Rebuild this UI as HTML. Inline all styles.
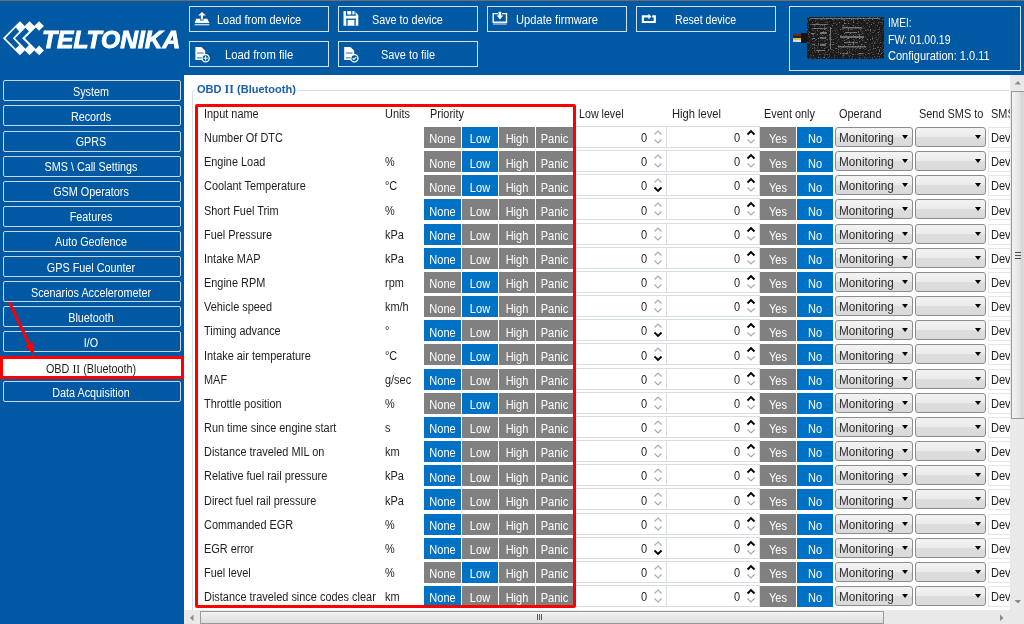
<!DOCTYPE html><html><head><meta charset="utf-8"><style>
*{box-sizing:border-box;margin:0;padding:0}
html,body{width:1024px;height:624px;overflow:hidden;background:#fff;font-family:"Liberation Sans", sans-serif;}
.a{position:absolute}
.t{position:absolute;white-space:nowrap;line-height:1}
.hb{position:absolute;border:1px solid #d3e1f0;height:26px;width:140px}
.sb{position:absolute;left:3px;width:178px;height:21px;border:1px solid #c8d9eb;border-radius:2px}
.pb{position:absolute;height:21px;background:#808080}
.on{background:#0072c6}
.sp{position:absolute;height:22px;border:1px solid #d9dee6;background:#fff}
.cb{position:absolute;height:20px;border:1px solid #8c8c8c;border-radius:3px;background:linear-gradient(#f3f3f3,#ebebeb 50%,#dddddd 51%,#d9d9d9)}
.cb i{position:absolute;right:4px;top:7px;width:0;height:0;border-left:3.5px solid transparent;border-right:3.5px solid transparent;border-top:4px solid #000}
.tx{position:absolute;height:21px;border:1px solid #e3e6ea;background:#fff}
</style></head><body>

<div class="a" style="left:0;top:0;width:1024px;height:1px;background:#6d6d6d"></div>
<div class="a" style="left:0;top:1px;width:1024px;height:74px;background:#0059a2"></div>
<div class="a" style="left:0;top:75px;width:184px;height:549px;background:#0059a2"></div>
<svg class="a" style="left:0;top:0" width="60" height="70" viewBox="0 0 60 70">
<path d="M2.9 38.2 L15.1 26.0 L19.9 21.2 L24.7 26.0 L29.5 21.2 L34.3 26.0 L39.1 21.2 L43.9 26.0 L39.1 30.8 L35.8 27.5 L25.0 38.2 L35.8 48.9 L39.1 45.6 L43.9 50.4 L39.1 55.2 L34.3 50.4 L29.5 55.2 L24.7 50.4 L19.9 55.2 L15.1 50.4Z" fill="#fff"/>
<path d="M5.4 38.2 L15.7 27.6 L19.2 31.5 L12.8 38.2 L19.2 44.9 L15.7 48.8Z" fill="#0059a2"/>
<path d="M15.1 38.2 L25.5 27.7 L28.9 31.4 L22.1 38.2 L28.9 45.0 L25.5 48.7Z" fill="#0059a2"/>
</svg>
<div class="t" style="left:42px;top:28.8px;font-size:23.5px;font-weight:bold;font-style:italic;color:#fff;-webkit-text-stroke:0.9px #fff;transform:scaleX(1.045);transform-origin:0 0">TELTONIKA</div>
<div class="hb" style="left:189px;top:6px"></div>
<div class="t" style="left:217px;top:14.20px;font-size:12px;color:#fff;font-weight:normal;transform:scaleX(0.915);transform-origin:0 0;">Load from device</div>
<div class="hb" style="left:338px;top:6px"></div>
<div class="t" style="left:372.2px;top:14.20px;font-size:12px;color:#fff;font-weight:normal;transform:scaleX(0.9);transform-origin:0 0;">Save to device</div>
<div class="hb" style="left:487px;top:6px"></div>
<div class="t" style="left:516px;top:14.20px;font-size:12px;color:#fff;font-weight:normal;transform:scaleX(0.93);transform-origin:0 0;">Update firmware</div>
<div class="hb" style="left:636px;top:6px"></div>
<div class="t" style="left:675.3px;top:14.20px;font-size:12px;color:#fff;font-weight:normal;transform:scaleX(0.88);transform-origin:0 0;">Reset device</div>
<div class="hb" style="left:189px;top:41px"></div>
<div class="t" style="left:224.7px;top:49.20px;font-size:12px;color:#fff;font-weight:normal;transform:scaleX(0.94);transform-origin:0 0;">Load from file</div>
<div class="hb" style="left:338px;top:41px"></div>
<div class="t" style="left:380.6px;top:49.20px;font-size:12px;color:#fff;font-weight:normal;transform:scaleX(0.91);transform-origin:0 0;">Save to file</div>
<svg class="a" style="left:0;top:0" width="800" height="75">
<g fill="#fff">
<path d="M202 11.9 L205.9 15.6 L203 15.6 L203 19.6 L200.9 19.6 L200.9 15.6 L198.1 15.6Z"/>
<path d="M196.3 18.7 L200.2 18.7 L200.2 20.6 L203.6 20.6 L203.6 18.7 L207.3 18.7 L209.4 23 L194.6 23Z"/>
<rect x="194.6" y="23.9" width="14.8" height="1.5" fill-opacity="0.75"/>
<path d="M343.5 11 L354.6 11 L358.3 15 L358.3 25.8 L343.5 25.8Z"/>
</g>
<g fill="#0059a2">
<rect x="346" y="11" width="1.2" height="4.5"/><rect x="346" y="14.5" width="9.5" height="1.2"/><rect x="354.5" y="11" width="1" height="4.5"/>
<rect x="351.2" y="11" width="1.2" height="4"/>
<rect x="346.3" y="18.6" width="9.4" height="1.3"/><rect x="346.3" y="18.6" width="1.3" height="7.2"/><rect x="354.4" y="18.6" width="1.3" height="7.2"/>
</g>
<g fill="none" stroke="#fff" stroke-width="1.4">
<path d="M498 13.6 L493.2 13.6 L493.2 22.3 L506.5 22.3 L506.5 13.6 L502 13.6"/>
<path d="M649 16.4 L642.9 16.4 L642.9 22 L654.8 22 L654.8 16.4 L652.2 16.4" stroke-width="2.2"/>
</g>
<g fill="#fff">
<path d="M498.6 11.8 h2.6 v3.7 h2 l-3.3 4 l-3.3 -4 h2z"/>
<rect x="493" y="23.2" width="13.6" height="1.6" fill-opacity="0.55"/>
<path d="M648.5 13.8 L651.5 16.5 L648.5 19.4Z"/>
<path d="M195.4 47 L201.5 47 L205.2 50.7 L205.2 54.5 A4 4 0 0 0 202 60.1 L195.4 60.1Z"/>
<circle cx="205.6" cy="58.2" r="3.6" fill="none" stroke="#fff" stroke-width="1.3"/>
<path d="M205.6 56 v4.4 M203.4 58.2 h4.4" stroke="#fff" stroke-width="1.1"/>
<path d="M344.2 47 L350.5 47 L354.2 50.7 L354.2 54.5 A4 4 0 0 0 351 60.1 L344.2 60.1Z"/>
<circle cx="354.4" cy="58.2" r="3.6" fill="none" stroke="#fff" stroke-width="1.3"/>
<path d="M352.6 58.2 l1.3 1.3 l2.4 -2.4" fill="none" stroke="#fff" stroke-width="1.1"/>
</g>
<g fill="#0059a2" fill-opacity="0.55">
<rect x="197" y="52.2" width="6.5" height="1.6"/><rect x="197" y="57" width="4.5" height="1.6"/>
<rect x="346" y="52.2" width="6.5" height="1.6"/><rect x="346" y="57" width="4.5" height="1.6"/>
</g>
</svg>
<div class="a" style="left:789px;top:6px;width:232px;height:65px;border:1px solid #d3e1f0"></div>
<svg class="a" style="left:807px;top:17px" width="77" height="42"><defs><filter id="nz" x="0" y="0" width="100%" height="100%"><feTurbulence type="fractalNoise" baseFrequency="0.8" numOctaves="2" seed="7"/><feColorMatrix values="0 0 0 0 1  0 0 0 0 1  0 0 0 0 1  0 0 0 3 -1.6"/></filter></defs>
<rect width="77" height="42" rx="2" fill="#1a1a1a"/>
<rect width="77" height="42" filter="url(#nz)" opacity="0.5"/>
<g fill="#b0b0b0" fill-opacity="0.55">
<rect x="3" y="1" width="70" height="1"/><rect x="5" y="7" width="15" height="1"/><rect x="6" y="11" width="14" height="1"/>
<rect x="4" y="16" width="4" height="1"/><rect x="13" y="15" width="7" height="2"/><rect x="5" y="21" width="3" height="1"/><rect x="13" y="20" width="6" height="2"/>
<rect x="5" y="27" width="3" height="1"/><rect x="13" y="27" width="6" height="2"/><rect x="9" y="33" width="9" height="1"/>
<rect x="23" y="10" width="1" height="22"/>
<rect x="35" y="10" width="20" height="1.5"/><rect x="38" y="15" width="12" height="1"/><rect x="33" y="19" width="24" height="2"/>
<rect x="37" y="25" width="14" height="1"/><rect x="31" y="29" width="28" height="1.5"/><rect x="35" y="36" width="6" height="1"/><rect x="52" y="36" width="4" height="1"/>
</g></svg>
<div class="a" style="left:801px;top:33px;width:6px;height:10px;background:#141414"></div>
<div class="a" style="left:793px;top:34px;width:8px;height:2px;background:#7a2020"></div>
<div class="a" style="left:793px;top:36px;width:8px;height:2px;background:#222"></div>
<div class="a" style="left:793px;top:38px;width:8px;height:2px;background:#d8c040"></div>
<div class="a" style="left:793px;top:40px;width:8px;height:2px;background:#ddd"></div>
<div class="t" style="left:887.6px;top:17.20px;font-size:12px;color:#fff;font-weight:normal;transform:scaleX(0.84);transform-origin:0 0;">IMEI:</div>
<div class="t" style="left:887.6px;top:33.60px;font-size:12px;color:#fff;font-weight:normal;transform:scaleX(0.87);transform-origin:0 0;">FW: 01.00.19</div>
<div class="t" style="left:887.6px;top:50.00px;font-size:12px;color:#fff;font-weight:normal;transform:scaleX(0.92);transform-origin:0 0;">Configuration: 1.0.11</div>
<div class="sb" style="top:80px"></div>
<div class="t" style="left:2.3px;top:86.00px;width:178px;text-align:center;font-size:12px;color:#fff;font-weight:normal;transform:scaleX(0.9);transform-origin:50% 0;">System</div>
<div class="sb" style="top:105px"></div>
<div class="t" style="left:2.3px;top:111.08px;width:178px;text-align:center;font-size:12px;color:#fff;font-weight:normal;transform:scaleX(0.9);transform-origin:50% 0;">Records</div>
<div class="sb" style="top:131px"></div>
<div class="t" style="left:2.3px;top:136.16px;width:178px;text-align:center;font-size:12px;color:#fff;font-weight:normal;transform:scaleX(0.9);transform-origin:50% 0;">GPRS</div>
<div class="sb" style="top:156px"></div>
<div class="t" style="left:2.3px;top:161.24px;width:178px;text-align:center;font-size:12px;color:#fff;font-weight:normal;transform:scaleX(0.9);transform-origin:50% 0;">SMS \ Call Settings</div>
<div class="sb" style="top:181px"></div>
<div class="t" style="left:2.3px;top:186.32px;width:178px;text-align:center;font-size:12px;color:#fff;font-weight:normal;transform:scaleX(0.9);transform-origin:50% 0;">GSM Operators</div>
<div class="sb" style="top:206px"></div>
<div class="t" style="left:2.3px;top:211.40px;width:178px;text-align:center;font-size:12px;color:#fff;font-weight:normal;transform:scaleX(0.9);transform-origin:50% 0;">Features</div>
<div class="sb" style="top:231px"></div>
<div class="t" style="left:2.3px;top:236.48px;width:178px;text-align:center;font-size:12px;color:#fff;font-weight:normal;transform:scaleX(0.9);transform-origin:50% 0;">Auto Geofence</div>
<div class="sb" style="top:256px"></div>
<div class="t" style="left:2.3px;top:261.56px;width:178px;text-align:center;font-size:12px;color:#fff;font-weight:normal;transform:scaleX(0.9);transform-origin:50% 0;">GPS Fuel Counter</div>
<div class="sb" style="top:281px"></div>
<div class="t" style="left:2.3px;top:286.64px;width:178px;text-align:center;font-size:12px;color:#fff;font-weight:normal;transform:scaleX(0.9);transform-origin:50% 0;">Scenarios Accelerometer</div>
<div class="sb" style="top:306px"></div>
<div class="t" style="left:2.3px;top:311.72px;width:178px;text-align:center;font-size:12px;color:#fff;font-weight:normal;transform:scaleX(0.9);transform-origin:50% 0;">Bluetooth</div>
<div class="sb" style="top:331px"></div>
<div class="t" style="left:2.3px;top:336.80px;width:178px;text-align:center;font-size:12px;color:#fff;font-weight:normal;transform:scaleX(0.9);transform-origin:50% 0;">I/O</div>
<div class="a" style="left:0;top:356px;width:184px;height:23px;border:3px solid #f00;background:#fff"></div>
<div class="t" style="left:0px;top:362.48px;width:182px;text-align:center;font-size:12px;color:#1e1e1e;font-weight:normal;transform:scaleX(0.9);transform-origin:50% 0;">OBD <span style="font-family:Liberation Serif;font-size:13px">II</span> (Bluetooth)</div>
<div class="sb" style="top:381px"></div>
<div class="t" style="left:2.3px;top:386.96px;width:178px;text-align:center;font-size:12px;color:#fff;font-weight:normal;transform:scaleX(0.9);transform-origin:50% 0;">Data Acquisition</div>
<svg class="a" style="left:0;top:290px" width="60" height="80"><g>
<line x1="9.4" y1="12.3" x2="30" y2="56" stroke="#f00" stroke-width="3"/>
<path d="M25.5 56.5 L34.4 65.4 L33.3 52Z" fill="#f00"/></g></svg>
<div class="a" style="left:192px;top:90px;width:830px;height:540px;border:1px solid #d5dfe6;border-radius:3px"></div>
<div class="a" style="left:195px;top:82px;width:103px;height:14px;background:#fff"></div>
<div class="t" style="left:196.8px;top:82.98px;font-size:11.5px;color:#1a5fae;font-weight:bold;transform:scaleX(0.96);transform-origin:0 0;">OBD <span style="font-family:Liberation Serif;font-size:12.5px">II</span> (Bluetooth)</div>
<div class="t" style="left:204px;top:108.30px;font-size:12px;color:#1e1e1e;font-weight:normal;transform:scaleX(0.91);transform-origin:0 0;">Input name</div>
<div class="t" style="left:384.6px;top:108.30px;font-size:12px;color:#1e1e1e;font-weight:normal;transform:scaleX(0.91);transform-origin:0 0;">Units</div>
<div class="t" style="left:429.6px;top:108.30px;font-size:12px;color:#1e1e1e;font-weight:normal;transform:scaleX(0.91);transform-origin:0 0;">Priority</div>
<div class="t" style="left:578.8px;top:108.30px;font-size:12px;color:#1e1e1e;font-weight:normal;transform:scaleX(0.89);transform-origin:0 0;">Low level</div>
<div class="t" style="left:671.6px;top:108.30px;font-size:12px;color:#1e1e1e;font-weight:normal;transform:scaleX(0.93);transform-origin:0 0;">High level</div>
<div class="t" style="left:764px;top:108.30px;font-size:12px;color:#1e1e1e;font-weight:normal;transform:scaleX(0.91);transform-origin:0 0;">Event only</div>
<div class="t" style="left:838.5px;top:108.30px;font-size:12px;color:#1e1e1e;font-weight:normal;transform:scaleX(0.91);transform-origin:0 0;">Operand</div>
<div class="t" style="left:919px;top:108.30px;font-size:12px;color:#1e1e1e;font-weight:normal;transform:scaleX(0.91);transform-origin:0 0;">Send SMS to</div>
<div class="t" style="left:991px;top:108.30px;font-size:12px;color:#1e1e1e;font-weight:normal;transform:scaleX(0.91);transform-origin:0 0;">SMS</div>
<div class="t" style="left:204.4px;top:132.10px;font-size:12px;color:#1e1e1e;font-weight:normal;transform:scaleX(0.91);transform-origin:0 0;">Number Of DTC</div>
<div class="pb" style="left:424px;top:127px;width:37px"></div>
<div class="t" style="left:424px;top:133.40px;width:37px;text-align:center;font-size:12px;color:#fff;font-weight:normal;transform:scaleX(0.92);transform-origin:50% 0;">None</div>
<div class="pb on" style="left:462px;top:127px;width:36px"></div>
<div class="t" style="left:462px;top:133.40px;width:36px;text-align:center;font-size:12px;color:#fff;font-weight:normal;transform:scaleX(0.92);transform-origin:50% 0;">Low</div>
<div class="pb" style="left:499px;top:127px;width:36px"></div>
<div class="t" style="left:499px;top:133.40px;width:36px;text-align:center;font-size:12px;color:#fff;font-weight:normal;transform:scaleX(0.92);transform-origin:50% 0;">High</div>
<div class="pb" style="left:536px;top:127px;width:37px"></div>
<div class="t" style="left:536px;top:133.40px;width:37px;text-align:center;font-size:12px;color:#fff;font-weight:normal;transform:scaleX(0.92);transform-origin:50% 0;">Panic</div>
<div class="sp" style="left:575px;top:126px;width:92px"></div>
<div class="sp" style="left:666px;top:126px;width:94px"></div>
<div class="t" style="left:641px;top:132.10px;font-size:12px;color:#1e1e1e;font-weight:normal;transform:scaleX(0.92);transform-origin:0 0;">0</div>
<div class="t" style="left:734px;top:132.10px;font-size:12px;color:#1e1e1e;font-weight:normal;transform:scaleX(0.92);transform-origin:0 0;">0</div>
<div class="pb" style="left:760px;top:127px;width:36px"></div>
<div class="t" style="left:760px;top:133.40px;width:36px;text-align:center;font-size:12px;color:#fff;font-weight:normal;transform:scaleX(0.92);transform-origin:50% 0;">Yes</div>
<div class="pb on" style="left:797px;top:127px;width:36px"></div>
<div class="t" style="left:797px;top:133.40px;width:36px;text-align:center;font-size:12px;color:#fff;font-weight:normal;transform:scaleX(0.92);transform-origin:50% 0;">No</div>
<div class="cb" style="left:835px;top:127px;width:78px"><i></i></div>
<div class="t" style="left:839px;top:132.10px;font-size:12px;color:#2e2e2e;font-weight:normal;transform:scaleX(0.98);transform-origin:0 0;">Monitoring</div>
<div class="cb" style="left:915px;top:127px;width:71px"><i></i></div>
<div class="tx" style="left:988px;top:127px;width:40px"></div>
<div class="t" style="left:991px;top:132.10px;font-size:12px;color:#1e1e1e;font-weight:normal;transform:scaleX(0.92);transform-origin:0 0;">Dev</div>
<div class="t" style="left:204.4px;top:156.26px;font-size:12px;color:#1e1e1e;font-weight:normal;transform:scaleX(0.91);transform-origin:0 0;">Engine Load</div>
<div class="t" style="left:384.6px;top:156.26px;font-size:12px;color:#1e1e1e;font-weight:normal;transform:scaleX(0.91);transform-origin:0 0;">%</div>
<div class="pb" style="left:424px;top:151px;width:37px"></div>
<div class="t" style="left:424px;top:157.56px;width:37px;text-align:center;font-size:12px;color:#fff;font-weight:normal;transform:scaleX(0.92);transform-origin:50% 0;">None</div>
<div class="pb on" style="left:462px;top:151px;width:36px"></div>
<div class="t" style="left:462px;top:157.56px;width:36px;text-align:center;font-size:12px;color:#fff;font-weight:normal;transform:scaleX(0.92);transform-origin:50% 0;">Low</div>
<div class="pb" style="left:499px;top:151px;width:36px"></div>
<div class="t" style="left:499px;top:157.56px;width:36px;text-align:center;font-size:12px;color:#fff;font-weight:normal;transform:scaleX(0.92);transform-origin:50% 0;">High</div>
<div class="pb" style="left:536px;top:151px;width:37px"></div>
<div class="t" style="left:536px;top:157.56px;width:37px;text-align:center;font-size:12px;color:#fff;font-weight:normal;transform:scaleX(0.92);transform-origin:50% 0;">Panic</div>
<div class="sp" style="left:575px;top:150px;width:92px"></div>
<div class="sp" style="left:666px;top:150px;width:94px"></div>
<div class="t" style="left:641px;top:156.26px;font-size:12px;color:#1e1e1e;font-weight:normal;transform:scaleX(0.92);transform-origin:0 0;">0</div>
<div class="t" style="left:734px;top:156.26px;font-size:12px;color:#1e1e1e;font-weight:normal;transform:scaleX(0.92);transform-origin:0 0;">0</div>
<div class="pb" style="left:760px;top:151px;width:36px"></div>
<div class="t" style="left:760px;top:157.56px;width:36px;text-align:center;font-size:12px;color:#fff;font-weight:normal;transform:scaleX(0.92);transform-origin:50% 0;">Yes</div>
<div class="pb on" style="left:797px;top:151px;width:36px"></div>
<div class="t" style="left:797px;top:157.56px;width:36px;text-align:center;font-size:12px;color:#fff;font-weight:normal;transform:scaleX(0.92);transform-origin:50% 0;">No</div>
<div class="cb" style="left:835px;top:151px;width:78px"><i></i></div>
<div class="t" style="left:839px;top:156.26px;font-size:12px;color:#2e2e2e;font-weight:normal;transform:scaleX(0.98);transform-origin:0 0;">Monitoring</div>
<div class="cb" style="left:915px;top:151px;width:71px"><i></i></div>
<div class="tx" style="left:988px;top:151px;width:40px"></div>
<div class="t" style="left:991px;top:156.26px;font-size:12px;color:#1e1e1e;font-weight:normal;transform:scaleX(0.92);transform-origin:0 0;">Dev</div>
<div class="t" style="left:204.4px;top:180.42px;font-size:12px;color:#1e1e1e;font-weight:normal;transform:scaleX(0.91);transform-origin:0 0;">Coolant Temperature</div>
<div class="t" style="left:384.6px;top:180.42px;font-size:12px;color:#1e1e1e;font-weight:normal;transform:scaleX(0.91);transform-origin:0 0;">°C</div>
<div class="pb" style="left:424px;top:175px;width:37px"></div>
<div class="t" style="left:424px;top:181.72px;width:37px;text-align:center;font-size:12px;color:#fff;font-weight:normal;transform:scaleX(0.92);transform-origin:50% 0;">None</div>
<div class="pb on" style="left:462px;top:175px;width:36px"></div>
<div class="t" style="left:462px;top:181.72px;width:36px;text-align:center;font-size:12px;color:#fff;font-weight:normal;transform:scaleX(0.92);transform-origin:50% 0;">Low</div>
<div class="pb" style="left:499px;top:175px;width:36px"></div>
<div class="t" style="left:499px;top:181.72px;width:36px;text-align:center;font-size:12px;color:#fff;font-weight:normal;transform:scaleX(0.92);transform-origin:50% 0;">High</div>
<div class="pb" style="left:536px;top:175px;width:37px"></div>
<div class="t" style="left:536px;top:181.72px;width:37px;text-align:center;font-size:12px;color:#fff;font-weight:normal;transform:scaleX(0.92);transform-origin:50% 0;">Panic</div>
<div class="sp" style="left:575px;top:174px;width:92px"></div>
<div class="sp" style="left:666px;top:174px;width:94px"></div>
<div class="t" style="left:641px;top:180.42px;font-size:12px;color:#1e1e1e;font-weight:normal;transform:scaleX(0.92);transform-origin:0 0;">0</div>
<div class="t" style="left:734px;top:180.42px;font-size:12px;color:#1e1e1e;font-weight:normal;transform:scaleX(0.92);transform-origin:0 0;">0</div>
<div class="pb" style="left:760px;top:175px;width:36px"></div>
<div class="t" style="left:760px;top:181.72px;width:36px;text-align:center;font-size:12px;color:#fff;font-weight:normal;transform:scaleX(0.92);transform-origin:50% 0;">Yes</div>
<div class="pb on" style="left:797px;top:175px;width:36px"></div>
<div class="t" style="left:797px;top:181.72px;width:36px;text-align:center;font-size:12px;color:#fff;font-weight:normal;transform:scaleX(0.92);transform-origin:50% 0;">No</div>
<div class="cb" style="left:835px;top:175px;width:78px"><i></i></div>
<div class="t" style="left:839px;top:180.42px;font-size:12px;color:#2e2e2e;font-weight:normal;transform:scaleX(0.98);transform-origin:0 0;">Monitoring</div>
<div class="cb" style="left:915px;top:175px;width:71px"><i></i></div>
<div class="tx" style="left:988px;top:175px;width:40px"></div>
<div class="t" style="left:991px;top:180.42px;font-size:12px;color:#1e1e1e;font-weight:normal;transform:scaleX(0.92);transform-origin:0 0;">Dev</div>
<div class="t" style="left:204.4px;top:204.58px;font-size:12px;color:#1e1e1e;font-weight:normal;transform:scaleX(0.91);transform-origin:0 0;">Short Fuel Trim</div>
<div class="t" style="left:384.6px;top:204.58px;font-size:12px;color:#1e1e1e;font-weight:normal;transform:scaleX(0.91);transform-origin:0 0;">%</div>
<div class="pb on" style="left:424px;top:199px;width:37px"></div>
<div class="t" style="left:424px;top:205.88px;width:37px;text-align:center;font-size:12px;color:#fff;font-weight:normal;transform:scaleX(0.92);transform-origin:50% 0;">None</div>
<div class="pb" style="left:462px;top:199px;width:36px"></div>
<div class="t" style="left:462px;top:205.88px;width:36px;text-align:center;font-size:12px;color:#fff;font-weight:normal;transform:scaleX(0.92);transform-origin:50% 0;">Low</div>
<div class="pb" style="left:499px;top:199px;width:36px"></div>
<div class="t" style="left:499px;top:205.88px;width:36px;text-align:center;font-size:12px;color:#fff;font-weight:normal;transform:scaleX(0.92);transform-origin:50% 0;">High</div>
<div class="pb" style="left:536px;top:199px;width:37px"></div>
<div class="t" style="left:536px;top:205.88px;width:37px;text-align:center;font-size:12px;color:#fff;font-weight:normal;transform:scaleX(0.92);transform-origin:50% 0;">Panic</div>
<div class="sp" style="left:575px;top:198px;width:92px"></div>
<div class="sp" style="left:666px;top:198px;width:94px"></div>
<div class="t" style="left:641px;top:204.58px;font-size:12px;color:#1e1e1e;font-weight:normal;transform:scaleX(0.92);transform-origin:0 0;">0</div>
<div class="t" style="left:734px;top:204.58px;font-size:12px;color:#1e1e1e;font-weight:normal;transform:scaleX(0.92);transform-origin:0 0;">0</div>
<div class="pb" style="left:760px;top:199px;width:36px"></div>
<div class="t" style="left:760px;top:205.88px;width:36px;text-align:center;font-size:12px;color:#fff;font-weight:normal;transform:scaleX(0.92);transform-origin:50% 0;">Yes</div>
<div class="pb on" style="left:797px;top:199px;width:36px"></div>
<div class="t" style="left:797px;top:205.88px;width:36px;text-align:center;font-size:12px;color:#fff;font-weight:normal;transform:scaleX(0.92);transform-origin:50% 0;">No</div>
<div class="cb" style="left:835px;top:199px;width:78px"><i></i></div>
<div class="t" style="left:839px;top:204.58px;font-size:12px;color:#2e2e2e;font-weight:normal;transform:scaleX(0.98);transform-origin:0 0;">Monitoring</div>
<div class="cb" style="left:915px;top:199px;width:71px"><i></i></div>
<div class="tx" style="left:988px;top:199px;width:40px"></div>
<div class="t" style="left:991px;top:204.58px;font-size:12px;color:#1e1e1e;font-weight:normal;transform:scaleX(0.92);transform-origin:0 0;">Dev</div>
<div class="t" style="left:204.4px;top:228.74px;font-size:12px;color:#1e1e1e;font-weight:normal;transform:scaleX(0.91);transform-origin:0 0;">Fuel Pressure</div>
<div class="t" style="left:384.6px;top:228.74px;font-size:12px;color:#1e1e1e;font-weight:normal;transform:scaleX(0.91);transform-origin:0 0;">kPa</div>
<div class="pb on" style="left:424px;top:224px;width:37px"></div>
<div class="t" style="left:424px;top:230.04px;width:37px;text-align:center;font-size:12px;color:#fff;font-weight:normal;transform:scaleX(0.92);transform-origin:50% 0;">None</div>
<div class="pb" style="left:462px;top:224px;width:36px"></div>
<div class="t" style="left:462px;top:230.04px;width:36px;text-align:center;font-size:12px;color:#fff;font-weight:normal;transform:scaleX(0.92);transform-origin:50% 0;">Low</div>
<div class="pb" style="left:499px;top:224px;width:36px"></div>
<div class="t" style="left:499px;top:230.04px;width:36px;text-align:center;font-size:12px;color:#fff;font-weight:normal;transform:scaleX(0.92);transform-origin:50% 0;">High</div>
<div class="pb" style="left:536px;top:224px;width:37px"></div>
<div class="t" style="left:536px;top:230.04px;width:37px;text-align:center;font-size:12px;color:#fff;font-weight:normal;transform:scaleX(0.92);transform-origin:50% 0;">Panic</div>
<div class="sp" style="left:575px;top:223px;width:92px"></div>
<div class="sp" style="left:666px;top:223px;width:94px"></div>
<div class="t" style="left:641px;top:228.74px;font-size:12px;color:#1e1e1e;font-weight:normal;transform:scaleX(0.92);transform-origin:0 0;">0</div>
<div class="t" style="left:734px;top:228.74px;font-size:12px;color:#1e1e1e;font-weight:normal;transform:scaleX(0.92);transform-origin:0 0;">0</div>
<div class="pb" style="left:760px;top:224px;width:36px"></div>
<div class="t" style="left:760px;top:230.04px;width:36px;text-align:center;font-size:12px;color:#fff;font-weight:normal;transform:scaleX(0.92);transform-origin:50% 0;">Yes</div>
<div class="pb on" style="left:797px;top:224px;width:36px"></div>
<div class="t" style="left:797px;top:230.04px;width:36px;text-align:center;font-size:12px;color:#fff;font-weight:normal;transform:scaleX(0.92);transform-origin:50% 0;">No</div>
<div class="cb" style="left:835px;top:224px;width:78px"><i></i></div>
<div class="t" style="left:839px;top:228.74px;font-size:12px;color:#2e2e2e;font-weight:normal;transform:scaleX(0.98);transform-origin:0 0;">Monitoring</div>
<div class="cb" style="left:915px;top:224px;width:71px"><i></i></div>
<div class="tx" style="left:988px;top:224px;width:40px"></div>
<div class="t" style="left:991px;top:228.74px;font-size:12px;color:#1e1e1e;font-weight:normal;transform:scaleX(0.92);transform-origin:0 0;">Dev</div>
<div class="t" style="left:204.4px;top:252.90px;font-size:12px;color:#1e1e1e;font-weight:normal;transform:scaleX(0.91);transform-origin:0 0;">Intake MAP</div>
<div class="t" style="left:384.6px;top:252.90px;font-size:12px;color:#1e1e1e;font-weight:normal;transform:scaleX(0.91);transform-origin:0 0;">kPa</div>
<div class="pb on" style="left:424px;top:248px;width:37px"></div>
<div class="t" style="left:424px;top:254.20px;width:37px;text-align:center;font-size:12px;color:#fff;font-weight:normal;transform:scaleX(0.92);transform-origin:50% 0;">None</div>
<div class="pb" style="left:462px;top:248px;width:36px"></div>
<div class="t" style="left:462px;top:254.20px;width:36px;text-align:center;font-size:12px;color:#fff;font-weight:normal;transform:scaleX(0.92);transform-origin:50% 0;">Low</div>
<div class="pb" style="left:499px;top:248px;width:36px"></div>
<div class="t" style="left:499px;top:254.20px;width:36px;text-align:center;font-size:12px;color:#fff;font-weight:normal;transform:scaleX(0.92);transform-origin:50% 0;">High</div>
<div class="pb" style="left:536px;top:248px;width:37px"></div>
<div class="t" style="left:536px;top:254.20px;width:37px;text-align:center;font-size:12px;color:#fff;font-weight:normal;transform:scaleX(0.92);transform-origin:50% 0;">Panic</div>
<div class="sp" style="left:575px;top:247px;width:92px"></div>
<div class="sp" style="left:666px;top:247px;width:94px"></div>
<div class="t" style="left:641px;top:252.90px;font-size:12px;color:#1e1e1e;font-weight:normal;transform:scaleX(0.92);transform-origin:0 0;">0</div>
<div class="t" style="left:734px;top:252.90px;font-size:12px;color:#1e1e1e;font-weight:normal;transform:scaleX(0.92);transform-origin:0 0;">0</div>
<div class="pb" style="left:760px;top:248px;width:36px"></div>
<div class="t" style="left:760px;top:254.20px;width:36px;text-align:center;font-size:12px;color:#fff;font-weight:normal;transform:scaleX(0.92);transform-origin:50% 0;">Yes</div>
<div class="pb on" style="left:797px;top:248px;width:36px"></div>
<div class="t" style="left:797px;top:254.20px;width:36px;text-align:center;font-size:12px;color:#fff;font-weight:normal;transform:scaleX(0.92);transform-origin:50% 0;">No</div>
<div class="cb" style="left:835px;top:248px;width:78px"><i></i></div>
<div class="t" style="left:839px;top:252.90px;font-size:12px;color:#2e2e2e;font-weight:normal;transform:scaleX(0.98);transform-origin:0 0;">Monitoring</div>
<div class="cb" style="left:915px;top:248px;width:71px"><i></i></div>
<div class="tx" style="left:988px;top:248px;width:40px"></div>
<div class="t" style="left:991px;top:252.90px;font-size:12px;color:#1e1e1e;font-weight:normal;transform:scaleX(0.92);transform-origin:0 0;">Dev</div>
<div class="t" style="left:204.4px;top:277.06px;font-size:12px;color:#1e1e1e;font-weight:normal;transform:scaleX(0.91);transform-origin:0 0;">Engine RPM</div>
<div class="t" style="left:384.6px;top:277.06px;font-size:12px;color:#1e1e1e;font-weight:normal;transform:scaleX(0.91);transform-origin:0 0;">rpm</div>
<div class="pb" style="left:424px;top:272px;width:37px"></div>
<div class="t" style="left:424px;top:278.36px;width:37px;text-align:center;font-size:12px;color:#fff;font-weight:normal;transform:scaleX(0.92);transform-origin:50% 0;">None</div>
<div class="pb on" style="left:462px;top:272px;width:36px"></div>
<div class="t" style="left:462px;top:278.36px;width:36px;text-align:center;font-size:12px;color:#fff;font-weight:normal;transform:scaleX(0.92);transform-origin:50% 0;">Low</div>
<div class="pb" style="left:499px;top:272px;width:36px"></div>
<div class="t" style="left:499px;top:278.36px;width:36px;text-align:center;font-size:12px;color:#fff;font-weight:normal;transform:scaleX(0.92);transform-origin:50% 0;">High</div>
<div class="pb" style="left:536px;top:272px;width:37px"></div>
<div class="t" style="left:536px;top:278.36px;width:37px;text-align:center;font-size:12px;color:#fff;font-weight:normal;transform:scaleX(0.92);transform-origin:50% 0;">Panic</div>
<div class="sp" style="left:575px;top:271px;width:92px"></div>
<div class="sp" style="left:666px;top:271px;width:94px"></div>
<div class="t" style="left:641px;top:277.06px;font-size:12px;color:#1e1e1e;font-weight:normal;transform:scaleX(0.92);transform-origin:0 0;">0</div>
<div class="t" style="left:734px;top:277.06px;font-size:12px;color:#1e1e1e;font-weight:normal;transform:scaleX(0.92);transform-origin:0 0;">0</div>
<div class="pb" style="left:760px;top:272px;width:36px"></div>
<div class="t" style="left:760px;top:278.36px;width:36px;text-align:center;font-size:12px;color:#fff;font-weight:normal;transform:scaleX(0.92);transform-origin:50% 0;">Yes</div>
<div class="pb on" style="left:797px;top:272px;width:36px"></div>
<div class="t" style="left:797px;top:278.36px;width:36px;text-align:center;font-size:12px;color:#fff;font-weight:normal;transform:scaleX(0.92);transform-origin:50% 0;">No</div>
<div class="cb" style="left:835px;top:272px;width:78px"><i></i></div>
<div class="t" style="left:839px;top:277.06px;font-size:12px;color:#2e2e2e;font-weight:normal;transform:scaleX(0.98);transform-origin:0 0;">Monitoring</div>
<div class="cb" style="left:915px;top:272px;width:71px"><i></i></div>
<div class="tx" style="left:988px;top:272px;width:40px"></div>
<div class="t" style="left:991px;top:277.06px;font-size:12px;color:#1e1e1e;font-weight:normal;transform:scaleX(0.92);transform-origin:0 0;">Dev</div>
<div class="t" style="left:204.4px;top:301.22px;font-size:12px;color:#1e1e1e;font-weight:normal;transform:scaleX(0.91);transform-origin:0 0;">Vehicle speed</div>
<div class="t" style="left:384.6px;top:301.22px;font-size:12px;color:#1e1e1e;font-weight:normal;transform:scaleX(0.91);transform-origin:0 0;">km/h</div>
<div class="pb" style="left:424px;top:296px;width:37px"></div>
<div class="t" style="left:424px;top:302.52px;width:37px;text-align:center;font-size:12px;color:#fff;font-weight:normal;transform:scaleX(0.92);transform-origin:50% 0;">None</div>
<div class="pb on" style="left:462px;top:296px;width:36px"></div>
<div class="t" style="left:462px;top:302.52px;width:36px;text-align:center;font-size:12px;color:#fff;font-weight:normal;transform:scaleX(0.92);transform-origin:50% 0;">Low</div>
<div class="pb" style="left:499px;top:296px;width:36px"></div>
<div class="t" style="left:499px;top:302.52px;width:36px;text-align:center;font-size:12px;color:#fff;font-weight:normal;transform:scaleX(0.92);transform-origin:50% 0;">High</div>
<div class="pb" style="left:536px;top:296px;width:37px"></div>
<div class="t" style="left:536px;top:302.52px;width:37px;text-align:center;font-size:12px;color:#fff;font-weight:normal;transform:scaleX(0.92);transform-origin:50% 0;">Panic</div>
<div class="sp" style="left:575px;top:295px;width:92px"></div>
<div class="sp" style="left:666px;top:295px;width:94px"></div>
<div class="t" style="left:641px;top:301.22px;font-size:12px;color:#1e1e1e;font-weight:normal;transform:scaleX(0.92);transform-origin:0 0;">0</div>
<div class="t" style="left:734px;top:301.22px;font-size:12px;color:#1e1e1e;font-weight:normal;transform:scaleX(0.92);transform-origin:0 0;">0</div>
<div class="pb" style="left:760px;top:296px;width:36px"></div>
<div class="t" style="left:760px;top:302.52px;width:36px;text-align:center;font-size:12px;color:#fff;font-weight:normal;transform:scaleX(0.92);transform-origin:50% 0;">Yes</div>
<div class="pb on" style="left:797px;top:296px;width:36px"></div>
<div class="t" style="left:797px;top:302.52px;width:36px;text-align:center;font-size:12px;color:#fff;font-weight:normal;transform:scaleX(0.92);transform-origin:50% 0;">No</div>
<div class="cb" style="left:835px;top:296px;width:78px"><i></i></div>
<div class="t" style="left:839px;top:301.22px;font-size:12px;color:#2e2e2e;font-weight:normal;transform:scaleX(0.98);transform-origin:0 0;">Monitoring</div>
<div class="cb" style="left:915px;top:296px;width:71px"><i></i></div>
<div class="tx" style="left:988px;top:296px;width:40px"></div>
<div class="t" style="left:991px;top:301.22px;font-size:12px;color:#1e1e1e;font-weight:normal;transform:scaleX(0.92);transform-origin:0 0;">Dev</div>
<div class="t" style="left:204.4px;top:325.38px;font-size:12px;color:#1e1e1e;font-weight:normal;transform:scaleX(0.91);transform-origin:0 0;">Timing advance</div>
<div class="t" style="left:384.6px;top:325.38px;font-size:12px;color:#1e1e1e;font-weight:normal;transform:scaleX(0.91);transform-origin:0 0;">°</div>
<div class="pb on" style="left:424px;top:320px;width:37px"></div>
<div class="t" style="left:424px;top:326.68px;width:37px;text-align:center;font-size:12px;color:#fff;font-weight:normal;transform:scaleX(0.92);transform-origin:50% 0;">None</div>
<div class="pb" style="left:462px;top:320px;width:36px"></div>
<div class="t" style="left:462px;top:326.68px;width:36px;text-align:center;font-size:12px;color:#fff;font-weight:normal;transform:scaleX(0.92);transform-origin:50% 0;">Low</div>
<div class="pb" style="left:499px;top:320px;width:36px"></div>
<div class="t" style="left:499px;top:326.68px;width:36px;text-align:center;font-size:12px;color:#fff;font-weight:normal;transform:scaleX(0.92);transform-origin:50% 0;">High</div>
<div class="pb" style="left:536px;top:320px;width:37px"></div>
<div class="t" style="left:536px;top:326.68px;width:37px;text-align:center;font-size:12px;color:#fff;font-weight:normal;transform:scaleX(0.92);transform-origin:50% 0;">Panic</div>
<div class="sp" style="left:575px;top:319px;width:92px"></div>
<div class="sp" style="left:666px;top:319px;width:94px"></div>
<div class="t" style="left:641px;top:325.38px;font-size:12px;color:#1e1e1e;font-weight:normal;transform:scaleX(0.92);transform-origin:0 0;">0</div>
<div class="t" style="left:734px;top:325.38px;font-size:12px;color:#1e1e1e;font-weight:normal;transform:scaleX(0.92);transform-origin:0 0;">0</div>
<div class="pb" style="left:760px;top:320px;width:36px"></div>
<div class="t" style="left:760px;top:326.68px;width:36px;text-align:center;font-size:12px;color:#fff;font-weight:normal;transform:scaleX(0.92);transform-origin:50% 0;">Yes</div>
<div class="pb on" style="left:797px;top:320px;width:36px"></div>
<div class="t" style="left:797px;top:326.68px;width:36px;text-align:center;font-size:12px;color:#fff;font-weight:normal;transform:scaleX(0.92);transform-origin:50% 0;">No</div>
<div class="cb" style="left:835px;top:320px;width:78px"><i></i></div>
<div class="t" style="left:839px;top:325.38px;font-size:12px;color:#2e2e2e;font-weight:normal;transform:scaleX(0.98);transform-origin:0 0;">Monitoring</div>
<div class="cb" style="left:915px;top:320px;width:71px"><i></i></div>
<div class="tx" style="left:988px;top:320px;width:40px"></div>
<div class="t" style="left:991px;top:325.38px;font-size:12px;color:#1e1e1e;font-weight:normal;transform:scaleX(0.92);transform-origin:0 0;">Dev</div>
<div class="t" style="left:204.4px;top:349.54px;font-size:12px;color:#1e1e1e;font-weight:normal;transform:scaleX(0.91);transform-origin:0 0;">Intake air temperature</div>
<div class="t" style="left:384.6px;top:349.54px;font-size:12px;color:#1e1e1e;font-weight:normal;transform:scaleX(0.91);transform-origin:0 0;">°C</div>
<div class="pb" style="left:424px;top:344px;width:37px"></div>
<div class="t" style="left:424px;top:350.84px;width:37px;text-align:center;font-size:12px;color:#fff;font-weight:normal;transform:scaleX(0.92);transform-origin:50% 0;">None</div>
<div class="pb on" style="left:462px;top:344px;width:36px"></div>
<div class="t" style="left:462px;top:350.84px;width:36px;text-align:center;font-size:12px;color:#fff;font-weight:normal;transform:scaleX(0.92);transform-origin:50% 0;">Low</div>
<div class="pb" style="left:499px;top:344px;width:36px"></div>
<div class="t" style="left:499px;top:350.84px;width:36px;text-align:center;font-size:12px;color:#fff;font-weight:normal;transform:scaleX(0.92);transform-origin:50% 0;">High</div>
<div class="pb" style="left:536px;top:344px;width:37px"></div>
<div class="t" style="left:536px;top:350.84px;width:37px;text-align:center;font-size:12px;color:#fff;font-weight:normal;transform:scaleX(0.92);transform-origin:50% 0;">Panic</div>
<div class="sp" style="left:575px;top:343px;width:92px"></div>
<div class="sp" style="left:666px;top:343px;width:94px"></div>
<div class="t" style="left:641px;top:349.54px;font-size:12px;color:#1e1e1e;font-weight:normal;transform:scaleX(0.92);transform-origin:0 0;">0</div>
<div class="t" style="left:734px;top:349.54px;font-size:12px;color:#1e1e1e;font-weight:normal;transform:scaleX(0.92);transform-origin:0 0;">0</div>
<div class="pb" style="left:760px;top:344px;width:36px"></div>
<div class="t" style="left:760px;top:350.84px;width:36px;text-align:center;font-size:12px;color:#fff;font-weight:normal;transform:scaleX(0.92);transform-origin:50% 0;">Yes</div>
<div class="pb on" style="left:797px;top:344px;width:36px"></div>
<div class="t" style="left:797px;top:350.84px;width:36px;text-align:center;font-size:12px;color:#fff;font-weight:normal;transform:scaleX(0.92);transform-origin:50% 0;">No</div>
<div class="cb" style="left:835px;top:344px;width:78px"><i></i></div>
<div class="t" style="left:839px;top:349.54px;font-size:12px;color:#2e2e2e;font-weight:normal;transform:scaleX(0.98);transform-origin:0 0;">Monitoring</div>
<div class="cb" style="left:915px;top:344px;width:71px"><i></i></div>
<div class="tx" style="left:988px;top:344px;width:40px"></div>
<div class="t" style="left:991px;top:349.54px;font-size:12px;color:#1e1e1e;font-weight:normal;transform:scaleX(0.92);transform-origin:0 0;">Dev</div>
<div class="t" style="left:204.4px;top:373.70px;font-size:12px;color:#1e1e1e;font-weight:normal;transform:scaleX(0.91);transform-origin:0 0;">MAF</div>
<div class="t" style="left:384.6px;top:373.70px;font-size:12px;color:#1e1e1e;font-weight:normal;transform:scaleX(0.91);transform-origin:0 0;">g/sec</div>
<div class="pb on" style="left:424px;top:369px;width:37px"></div>
<div class="t" style="left:424px;top:375.00px;width:37px;text-align:center;font-size:12px;color:#fff;font-weight:normal;transform:scaleX(0.92);transform-origin:50% 0;">None</div>
<div class="pb" style="left:462px;top:369px;width:36px"></div>
<div class="t" style="left:462px;top:375.00px;width:36px;text-align:center;font-size:12px;color:#fff;font-weight:normal;transform:scaleX(0.92);transform-origin:50% 0;">Low</div>
<div class="pb" style="left:499px;top:369px;width:36px"></div>
<div class="t" style="left:499px;top:375.00px;width:36px;text-align:center;font-size:12px;color:#fff;font-weight:normal;transform:scaleX(0.92);transform-origin:50% 0;">High</div>
<div class="pb" style="left:536px;top:369px;width:37px"></div>
<div class="t" style="left:536px;top:375.00px;width:37px;text-align:center;font-size:12px;color:#fff;font-weight:normal;transform:scaleX(0.92);transform-origin:50% 0;">Panic</div>
<div class="sp" style="left:575px;top:368px;width:92px"></div>
<div class="sp" style="left:666px;top:368px;width:94px"></div>
<div class="t" style="left:641px;top:373.70px;font-size:12px;color:#1e1e1e;font-weight:normal;transform:scaleX(0.92);transform-origin:0 0;">0</div>
<div class="t" style="left:734px;top:373.70px;font-size:12px;color:#1e1e1e;font-weight:normal;transform:scaleX(0.92);transform-origin:0 0;">0</div>
<div class="pb" style="left:760px;top:369px;width:36px"></div>
<div class="t" style="left:760px;top:375.00px;width:36px;text-align:center;font-size:12px;color:#fff;font-weight:normal;transform:scaleX(0.92);transform-origin:50% 0;">Yes</div>
<div class="pb on" style="left:797px;top:369px;width:36px"></div>
<div class="t" style="left:797px;top:375.00px;width:36px;text-align:center;font-size:12px;color:#fff;font-weight:normal;transform:scaleX(0.92);transform-origin:50% 0;">No</div>
<div class="cb" style="left:835px;top:369px;width:78px"><i></i></div>
<div class="t" style="left:839px;top:373.70px;font-size:12px;color:#2e2e2e;font-weight:normal;transform:scaleX(0.98);transform-origin:0 0;">Monitoring</div>
<div class="cb" style="left:915px;top:369px;width:71px"><i></i></div>
<div class="tx" style="left:988px;top:369px;width:40px"></div>
<div class="t" style="left:991px;top:373.70px;font-size:12px;color:#1e1e1e;font-weight:normal;transform:scaleX(0.92);transform-origin:0 0;">Dev</div>
<div class="t" style="left:204.4px;top:397.86px;font-size:12px;color:#1e1e1e;font-weight:normal;transform:scaleX(0.91);transform-origin:0 0;">Throttle position</div>
<div class="t" style="left:384.6px;top:397.86px;font-size:12px;color:#1e1e1e;font-weight:normal;transform:scaleX(0.91);transform-origin:0 0;">%</div>
<div class="pb" style="left:424px;top:393px;width:37px"></div>
<div class="t" style="left:424px;top:399.16px;width:37px;text-align:center;font-size:12px;color:#fff;font-weight:normal;transform:scaleX(0.92);transform-origin:50% 0;">None</div>
<div class="pb on" style="left:462px;top:393px;width:36px"></div>
<div class="t" style="left:462px;top:399.16px;width:36px;text-align:center;font-size:12px;color:#fff;font-weight:normal;transform:scaleX(0.92);transform-origin:50% 0;">Low</div>
<div class="pb" style="left:499px;top:393px;width:36px"></div>
<div class="t" style="left:499px;top:399.16px;width:36px;text-align:center;font-size:12px;color:#fff;font-weight:normal;transform:scaleX(0.92);transform-origin:50% 0;">High</div>
<div class="pb" style="left:536px;top:393px;width:37px"></div>
<div class="t" style="left:536px;top:399.16px;width:37px;text-align:center;font-size:12px;color:#fff;font-weight:normal;transform:scaleX(0.92);transform-origin:50% 0;">Panic</div>
<div class="sp" style="left:575px;top:392px;width:92px"></div>
<div class="sp" style="left:666px;top:392px;width:94px"></div>
<div class="t" style="left:641px;top:397.86px;font-size:12px;color:#1e1e1e;font-weight:normal;transform:scaleX(0.92);transform-origin:0 0;">0</div>
<div class="t" style="left:734px;top:397.86px;font-size:12px;color:#1e1e1e;font-weight:normal;transform:scaleX(0.92);transform-origin:0 0;">0</div>
<div class="pb" style="left:760px;top:393px;width:36px"></div>
<div class="t" style="left:760px;top:399.16px;width:36px;text-align:center;font-size:12px;color:#fff;font-weight:normal;transform:scaleX(0.92);transform-origin:50% 0;">Yes</div>
<div class="pb on" style="left:797px;top:393px;width:36px"></div>
<div class="t" style="left:797px;top:399.16px;width:36px;text-align:center;font-size:12px;color:#fff;font-weight:normal;transform:scaleX(0.92);transform-origin:50% 0;">No</div>
<div class="cb" style="left:835px;top:393px;width:78px"><i></i></div>
<div class="t" style="left:839px;top:397.86px;font-size:12px;color:#2e2e2e;font-weight:normal;transform:scaleX(0.98);transform-origin:0 0;">Monitoring</div>
<div class="cb" style="left:915px;top:393px;width:71px"><i></i></div>
<div class="tx" style="left:988px;top:393px;width:40px"></div>
<div class="t" style="left:991px;top:397.86px;font-size:12px;color:#1e1e1e;font-weight:normal;transform:scaleX(0.92);transform-origin:0 0;">Dev</div>
<div class="t" style="left:204.4px;top:422.02px;font-size:12px;color:#1e1e1e;font-weight:normal;transform:scaleX(0.91);transform-origin:0 0;">Run time since engine start</div>
<div class="t" style="left:384.6px;top:422.02px;font-size:12px;color:#1e1e1e;font-weight:normal;transform:scaleX(0.91);transform-origin:0 0;">s</div>
<div class="pb on" style="left:424px;top:417px;width:37px"></div>
<div class="t" style="left:424px;top:423.32px;width:37px;text-align:center;font-size:12px;color:#fff;font-weight:normal;transform:scaleX(0.92);transform-origin:50% 0;">None</div>
<div class="pb" style="left:462px;top:417px;width:36px"></div>
<div class="t" style="left:462px;top:423.32px;width:36px;text-align:center;font-size:12px;color:#fff;font-weight:normal;transform:scaleX(0.92);transform-origin:50% 0;">Low</div>
<div class="pb" style="left:499px;top:417px;width:36px"></div>
<div class="t" style="left:499px;top:423.32px;width:36px;text-align:center;font-size:12px;color:#fff;font-weight:normal;transform:scaleX(0.92);transform-origin:50% 0;">High</div>
<div class="pb" style="left:536px;top:417px;width:37px"></div>
<div class="t" style="left:536px;top:423.32px;width:37px;text-align:center;font-size:12px;color:#fff;font-weight:normal;transform:scaleX(0.92);transform-origin:50% 0;">Panic</div>
<div class="sp" style="left:575px;top:416px;width:92px"></div>
<div class="sp" style="left:666px;top:416px;width:94px"></div>
<div class="t" style="left:641px;top:422.02px;font-size:12px;color:#1e1e1e;font-weight:normal;transform:scaleX(0.92);transform-origin:0 0;">0</div>
<div class="t" style="left:734px;top:422.02px;font-size:12px;color:#1e1e1e;font-weight:normal;transform:scaleX(0.92);transform-origin:0 0;">0</div>
<div class="pb" style="left:760px;top:417px;width:36px"></div>
<div class="t" style="left:760px;top:423.32px;width:36px;text-align:center;font-size:12px;color:#fff;font-weight:normal;transform:scaleX(0.92);transform-origin:50% 0;">Yes</div>
<div class="pb on" style="left:797px;top:417px;width:36px"></div>
<div class="t" style="left:797px;top:423.32px;width:36px;text-align:center;font-size:12px;color:#fff;font-weight:normal;transform:scaleX(0.92);transform-origin:50% 0;">No</div>
<div class="cb" style="left:835px;top:417px;width:78px"><i></i></div>
<div class="t" style="left:839px;top:422.02px;font-size:12px;color:#2e2e2e;font-weight:normal;transform:scaleX(0.98);transform-origin:0 0;">Monitoring</div>
<div class="cb" style="left:915px;top:417px;width:71px"><i></i></div>
<div class="tx" style="left:988px;top:417px;width:40px"></div>
<div class="t" style="left:991px;top:422.02px;font-size:12px;color:#1e1e1e;font-weight:normal;transform:scaleX(0.92);transform-origin:0 0;">Dev</div>
<div class="t" style="left:204.4px;top:446.18px;font-size:12px;color:#1e1e1e;font-weight:normal;transform:scaleX(0.91);transform-origin:0 0;">Distance traveled MIL on</div>
<div class="t" style="left:384.6px;top:446.18px;font-size:12px;color:#1e1e1e;font-weight:normal;transform:scaleX(0.91);transform-origin:0 0;">km</div>
<div class="pb on" style="left:424px;top:441px;width:37px"></div>
<div class="t" style="left:424px;top:447.48px;width:37px;text-align:center;font-size:12px;color:#fff;font-weight:normal;transform:scaleX(0.92);transform-origin:50% 0;">None</div>
<div class="pb" style="left:462px;top:441px;width:36px"></div>
<div class="t" style="left:462px;top:447.48px;width:36px;text-align:center;font-size:12px;color:#fff;font-weight:normal;transform:scaleX(0.92);transform-origin:50% 0;">Low</div>
<div class="pb" style="left:499px;top:441px;width:36px"></div>
<div class="t" style="left:499px;top:447.48px;width:36px;text-align:center;font-size:12px;color:#fff;font-weight:normal;transform:scaleX(0.92);transform-origin:50% 0;">High</div>
<div class="pb" style="left:536px;top:441px;width:37px"></div>
<div class="t" style="left:536px;top:447.48px;width:37px;text-align:center;font-size:12px;color:#fff;font-weight:normal;transform:scaleX(0.92);transform-origin:50% 0;">Panic</div>
<div class="sp" style="left:575px;top:440px;width:92px"></div>
<div class="sp" style="left:666px;top:440px;width:94px"></div>
<div class="t" style="left:641px;top:446.18px;font-size:12px;color:#1e1e1e;font-weight:normal;transform:scaleX(0.92);transform-origin:0 0;">0</div>
<div class="t" style="left:734px;top:446.18px;font-size:12px;color:#1e1e1e;font-weight:normal;transform:scaleX(0.92);transform-origin:0 0;">0</div>
<div class="pb" style="left:760px;top:441px;width:36px"></div>
<div class="t" style="left:760px;top:447.48px;width:36px;text-align:center;font-size:12px;color:#fff;font-weight:normal;transform:scaleX(0.92);transform-origin:50% 0;">Yes</div>
<div class="pb on" style="left:797px;top:441px;width:36px"></div>
<div class="t" style="left:797px;top:447.48px;width:36px;text-align:center;font-size:12px;color:#fff;font-weight:normal;transform:scaleX(0.92);transform-origin:50% 0;">No</div>
<div class="cb" style="left:835px;top:441px;width:78px"><i></i></div>
<div class="t" style="left:839px;top:446.18px;font-size:12px;color:#2e2e2e;font-weight:normal;transform:scaleX(0.98);transform-origin:0 0;">Monitoring</div>
<div class="cb" style="left:915px;top:441px;width:71px"><i></i></div>
<div class="tx" style="left:988px;top:441px;width:40px"></div>
<div class="t" style="left:991px;top:446.18px;font-size:12px;color:#1e1e1e;font-weight:normal;transform:scaleX(0.92);transform-origin:0 0;">Dev</div>
<div class="t" style="left:204.4px;top:470.34px;font-size:12px;color:#1e1e1e;font-weight:normal;transform:scaleX(0.91);transform-origin:0 0;">Relative fuel rail pressure</div>
<div class="t" style="left:384.6px;top:470.34px;font-size:12px;color:#1e1e1e;font-weight:normal;transform:scaleX(0.91);transform-origin:0 0;">kPa</div>
<div class="pb on" style="left:424px;top:465px;width:37px"></div>
<div class="t" style="left:424px;top:471.64px;width:37px;text-align:center;font-size:12px;color:#fff;font-weight:normal;transform:scaleX(0.92);transform-origin:50% 0;">None</div>
<div class="pb" style="left:462px;top:465px;width:36px"></div>
<div class="t" style="left:462px;top:471.64px;width:36px;text-align:center;font-size:12px;color:#fff;font-weight:normal;transform:scaleX(0.92);transform-origin:50% 0;">Low</div>
<div class="pb" style="left:499px;top:465px;width:36px"></div>
<div class="t" style="left:499px;top:471.64px;width:36px;text-align:center;font-size:12px;color:#fff;font-weight:normal;transform:scaleX(0.92);transform-origin:50% 0;">High</div>
<div class="pb" style="left:536px;top:465px;width:37px"></div>
<div class="t" style="left:536px;top:471.64px;width:37px;text-align:center;font-size:12px;color:#fff;font-weight:normal;transform:scaleX(0.92);transform-origin:50% 0;">Panic</div>
<div class="sp" style="left:575px;top:464px;width:92px"></div>
<div class="sp" style="left:666px;top:464px;width:94px"></div>
<div class="t" style="left:641px;top:470.34px;font-size:12px;color:#1e1e1e;font-weight:normal;transform:scaleX(0.92);transform-origin:0 0;">0</div>
<div class="t" style="left:734px;top:470.34px;font-size:12px;color:#1e1e1e;font-weight:normal;transform:scaleX(0.92);transform-origin:0 0;">0</div>
<div class="pb" style="left:760px;top:465px;width:36px"></div>
<div class="t" style="left:760px;top:471.64px;width:36px;text-align:center;font-size:12px;color:#fff;font-weight:normal;transform:scaleX(0.92);transform-origin:50% 0;">Yes</div>
<div class="pb on" style="left:797px;top:465px;width:36px"></div>
<div class="t" style="left:797px;top:471.64px;width:36px;text-align:center;font-size:12px;color:#fff;font-weight:normal;transform:scaleX(0.92);transform-origin:50% 0;">No</div>
<div class="cb" style="left:835px;top:465px;width:78px"><i></i></div>
<div class="t" style="left:839px;top:470.34px;font-size:12px;color:#2e2e2e;font-weight:normal;transform:scaleX(0.98);transform-origin:0 0;">Monitoring</div>
<div class="cb" style="left:915px;top:465px;width:71px"><i></i></div>
<div class="tx" style="left:988px;top:465px;width:40px"></div>
<div class="t" style="left:991px;top:470.34px;font-size:12px;color:#1e1e1e;font-weight:normal;transform:scaleX(0.92);transform-origin:0 0;">Dev</div>
<div class="t" style="left:204.4px;top:494.50px;font-size:12px;color:#1e1e1e;font-weight:normal;transform:scaleX(0.91);transform-origin:0 0;">Direct fuel rail pressure</div>
<div class="t" style="left:384.6px;top:494.50px;font-size:12px;color:#1e1e1e;font-weight:normal;transform:scaleX(0.91);transform-origin:0 0;">kPa</div>
<div class="pb on" style="left:424px;top:489px;width:37px"></div>
<div class="t" style="left:424px;top:495.80px;width:37px;text-align:center;font-size:12px;color:#fff;font-weight:normal;transform:scaleX(0.92);transform-origin:50% 0;">None</div>
<div class="pb" style="left:462px;top:489px;width:36px"></div>
<div class="t" style="left:462px;top:495.80px;width:36px;text-align:center;font-size:12px;color:#fff;font-weight:normal;transform:scaleX(0.92);transform-origin:50% 0;">Low</div>
<div class="pb" style="left:499px;top:489px;width:36px"></div>
<div class="t" style="left:499px;top:495.80px;width:36px;text-align:center;font-size:12px;color:#fff;font-weight:normal;transform:scaleX(0.92);transform-origin:50% 0;">High</div>
<div class="pb" style="left:536px;top:489px;width:37px"></div>
<div class="t" style="left:536px;top:495.80px;width:37px;text-align:center;font-size:12px;color:#fff;font-weight:normal;transform:scaleX(0.92);transform-origin:50% 0;">Panic</div>
<div class="sp" style="left:575px;top:488px;width:92px"></div>
<div class="sp" style="left:666px;top:488px;width:94px"></div>
<div class="t" style="left:641px;top:494.50px;font-size:12px;color:#1e1e1e;font-weight:normal;transform:scaleX(0.92);transform-origin:0 0;">0</div>
<div class="t" style="left:734px;top:494.50px;font-size:12px;color:#1e1e1e;font-weight:normal;transform:scaleX(0.92);transform-origin:0 0;">0</div>
<div class="pb" style="left:760px;top:489px;width:36px"></div>
<div class="t" style="left:760px;top:495.80px;width:36px;text-align:center;font-size:12px;color:#fff;font-weight:normal;transform:scaleX(0.92);transform-origin:50% 0;">Yes</div>
<div class="pb on" style="left:797px;top:489px;width:36px"></div>
<div class="t" style="left:797px;top:495.80px;width:36px;text-align:center;font-size:12px;color:#fff;font-weight:normal;transform:scaleX(0.92);transform-origin:50% 0;">No</div>
<div class="cb" style="left:835px;top:489px;width:78px"><i></i></div>
<div class="t" style="left:839px;top:494.50px;font-size:12px;color:#2e2e2e;font-weight:normal;transform:scaleX(0.98);transform-origin:0 0;">Monitoring</div>
<div class="cb" style="left:915px;top:489px;width:71px"><i></i></div>
<div class="tx" style="left:988px;top:489px;width:40px"></div>
<div class="t" style="left:991px;top:494.50px;font-size:12px;color:#1e1e1e;font-weight:normal;transform:scaleX(0.92);transform-origin:0 0;">Dev</div>
<div class="t" style="left:204.4px;top:518.66px;font-size:12px;color:#1e1e1e;font-weight:normal;transform:scaleX(0.91);transform-origin:0 0;">Commanded EGR</div>
<div class="t" style="left:384.6px;top:518.66px;font-size:12px;color:#1e1e1e;font-weight:normal;transform:scaleX(0.91);transform-origin:0 0;">%</div>
<div class="pb on" style="left:424px;top:514px;width:37px"></div>
<div class="t" style="left:424px;top:519.96px;width:37px;text-align:center;font-size:12px;color:#fff;font-weight:normal;transform:scaleX(0.92);transform-origin:50% 0;">None</div>
<div class="pb" style="left:462px;top:514px;width:36px"></div>
<div class="t" style="left:462px;top:519.96px;width:36px;text-align:center;font-size:12px;color:#fff;font-weight:normal;transform:scaleX(0.92);transform-origin:50% 0;">Low</div>
<div class="pb" style="left:499px;top:514px;width:36px"></div>
<div class="t" style="left:499px;top:519.96px;width:36px;text-align:center;font-size:12px;color:#fff;font-weight:normal;transform:scaleX(0.92);transform-origin:50% 0;">High</div>
<div class="pb" style="left:536px;top:514px;width:37px"></div>
<div class="t" style="left:536px;top:519.96px;width:37px;text-align:center;font-size:12px;color:#fff;font-weight:normal;transform:scaleX(0.92);transform-origin:50% 0;">Panic</div>
<div class="sp" style="left:575px;top:513px;width:92px"></div>
<div class="sp" style="left:666px;top:513px;width:94px"></div>
<div class="t" style="left:641px;top:518.66px;font-size:12px;color:#1e1e1e;font-weight:normal;transform:scaleX(0.92);transform-origin:0 0;">0</div>
<div class="t" style="left:734px;top:518.66px;font-size:12px;color:#1e1e1e;font-weight:normal;transform:scaleX(0.92);transform-origin:0 0;">0</div>
<div class="pb" style="left:760px;top:514px;width:36px"></div>
<div class="t" style="left:760px;top:519.96px;width:36px;text-align:center;font-size:12px;color:#fff;font-weight:normal;transform:scaleX(0.92);transform-origin:50% 0;">Yes</div>
<div class="pb on" style="left:797px;top:514px;width:36px"></div>
<div class="t" style="left:797px;top:519.96px;width:36px;text-align:center;font-size:12px;color:#fff;font-weight:normal;transform:scaleX(0.92);transform-origin:50% 0;">No</div>
<div class="cb" style="left:835px;top:514px;width:78px"><i></i></div>
<div class="t" style="left:839px;top:518.66px;font-size:12px;color:#2e2e2e;font-weight:normal;transform:scaleX(0.98);transform-origin:0 0;">Monitoring</div>
<div class="cb" style="left:915px;top:514px;width:71px"><i></i></div>
<div class="tx" style="left:988px;top:514px;width:40px"></div>
<div class="t" style="left:991px;top:518.66px;font-size:12px;color:#1e1e1e;font-weight:normal;transform:scaleX(0.92);transform-origin:0 0;">Dev</div>
<div class="t" style="left:204.4px;top:542.82px;font-size:12px;color:#1e1e1e;font-weight:normal;transform:scaleX(0.91);transform-origin:0 0;">EGR error</div>
<div class="t" style="left:384.6px;top:542.82px;font-size:12px;color:#1e1e1e;font-weight:normal;transform:scaleX(0.91);transform-origin:0 0;">%</div>
<div class="pb on" style="left:424px;top:538px;width:37px"></div>
<div class="t" style="left:424px;top:544.12px;width:37px;text-align:center;font-size:12px;color:#fff;font-weight:normal;transform:scaleX(0.92);transform-origin:50% 0;">None</div>
<div class="pb" style="left:462px;top:538px;width:36px"></div>
<div class="t" style="left:462px;top:544.12px;width:36px;text-align:center;font-size:12px;color:#fff;font-weight:normal;transform:scaleX(0.92);transform-origin:50% 0;">Low</div>
<div class="pb" style="left:499px;top:538px;width:36px"></div>
<div class="t" style="left:499px;top:544.12px;width:36px;text-align:center;font-size:12px;color:#fff;font-weight:normal;transform:scaleX(0.92);transform-origin:50% 0;">High</div>
<div class="pb" style="left:536px;top:538px;width:37px"></div>
<div class="t" style="left:536px;top:544.12px;width:37px;text-align:center;font-size:12px;color:#fff;font-weight:normal;transform:scaleX(0.92);transform-origin:50% 0;">Panic</div>
<div class="sp" style="left:575px;top:537px;width:92px"></div>
<div class="sp" style="left:666px;top:537px;width:94px"></div>
<div class="t" style="left:641px;top:542.82px;font-size:12px;color:#1e1e1e;font-weight:normal;transform:scaleX(0.92);transform-origin:0 0;">0</div>
<div class="t" style="left:734px;top:542.82px;font-size:12px;color:#1e1e1e;font-weight:normal;transform:scaleX(0.92);transform-origin:0 0;">0</div>
<div class="pb" style="left:760px;top:538px;width:36px"></div>
<div class="t" style="left:760px;top:544.12px;width:36px;text-align:center;font-size:12px;color:#fff;font-weight:normal;transform:scaleX(0.92);transform-origin:50% 0;">Yes</div>
<div class="pb on" style="left:797px;top:538px;width:36px"></div>
<div class="t" style="left:797px;top:544.12px;width:36px;text-align:center;font-size:12px;color:#fff;font-weight:normal;transform:scaleX(0.92);transform-origin:50% 0;">No</div>
<div class="cb" style="left:835px;top:538px;width:78px"><i></i></div>
<div class="t" style="left:839px;top:542.82px;font-size:12px;color:#2e2e2e;font-weight:normal;transform:scaleX(0.98);transform-origin:0 0;">Monitoring</div>
<div class="cb" style="left:915px;top:538px;width:71px"><i></i></div>
<div class="tx" style="left:988px;top:538px;width:40px"></div>
<div class="t" style="left:991px;top:542.82px;font-size:12px;color:#1e1e1e;font-weight:normal;transform:scaleX(0.92);transform-origin:0 0;">Dev</div>
<div class="t" style="left:204.4px;top:566.98px;font-size:12px;color:#1e1e1e;font-weight:normal;transform:scaleX(0.91);transform-origin:0 0;">Fuel level</div>
<div class="t" style="left:384.6px;top:566.98px;font-size:12px;color:#1e1e1e;font-weight:normal;transform:scaleX(0.91);transform-origin:0 0;">%</div>
<div class="pb" style="left:424px;top:562px;width:37px"></div>
<div class="t" style="left:424px;top:568.28px;width:37px;text-align:center;font-size:12px;color:#fff;font-weight:normal;transform:scaleX(0.92);transform-origin:50% 0;">None</div>
<div class="pb on" style="left:462px;top:562px;width:36px"></div>
<div class="t" style="left:462px;top:568.28px;width:36px;text-align:center;font-size:12px;color:#fff;font-weight:normal;transform:scaleX(0.92);transform-origin:50% 0;">Low</div>
<div class="pb" style="left:499px;top:562px;width:36px"></div>
<div class="t" style="left:499px;top:568.28px;width:36px;text-align:center;font-size:12px;color:#fff;font-weight:normal;transform:scaleX(0.92);transform-origin:50% 0;">High</div>
<div class="pb" style="left:536px;top:562px;width:37px"></div>
<div class="t" style="left:536px;top:568.28px;width:37px;text-align:center;font-size:12px;color:#fff;font-weight:normal;transform:scaleX(0.92);transform-origin:50% 0;">Panic</div>
<div class="sp" style="left:575px;top:561px;width:92px"></div>
<div class="sp" style="left:666px;top:561px;width:94px"></div>
<div class="t" style="left:641px;top:566.98px;font-size:12px;color:#1e1e1e;font-weight:normal;transform:scaleX(0.92);transform-origin:0 0;">0</div>
<div class="t" style="left:734px;top:566.98px;font-size:12px;color:#1e1e1e;font-weight:normal;transform:scaleX(0.92);transform-origin:0 0;">0</div>
<div class="pb" style="left:760px;top:562px;width:36px"></div>
<div class="t" style="left:760px;top:568.28px;width:36px;text-align:center;font-size:12px;color:#fff;font-weight:normal;transform:scaleX(0.92);transform-origin:50% 0;">Yes</div>
<div class="pb on" style="left:797px;top:562px;width:36px"></div>
<div class="t" style="left:797px;top:568.28px;width:36px;text-align:center;font-size:12px;color:#fff;font-weight:normal;transform:scaleX(0.92);transform-origin:50% 0;">No</div>
<div class="cb" style="left:835px;top:562px;width:78px"><i></i></div>
<div class="t" style="left:839px;top:566.98px;font-size:12px;color:#2e2e2e;font-weight:normal;transform:scaleX(0.98);transform-origin:0 0;">Monitoring</div>
<div class="cb" style="left:915px;top:562px;width:71px"><i></i></div>
<div class="tx" style="left:988px;top:562px;width:40px"></div>
<div class="t" style="left:991px;top:566.98px;font-size:12px;color:#1e1e1e;font-weight:normal;transform:scaleX(0.92);transform-origin:0 0;">Dev</div>
<div class="t" style="left:204.4px;top:591.14px;font-size:12px;color:#1e1e1e;font-weight:normal;transform:scaleX(0.91);transform-origin:0 0;">Distance traveled since codes clear</div>
<div class="t" style="left:384.6px;top:591.14px;font-size:12px;color:#1e1e1e;font-weight:normal;transform:scaleX(0.91);transform-origin:0 0;">km</div>
<div class="pb on" style="left:424px;top:586px;width:37px"></div>
<div class="t" style="left:424px;top:592.44px;width:37px;text-align:center;font-size:12px;color:#fff;font-weight:normal;transform:scaleX(0.92);transform-origin:50% 0;">None</div>
<div class="pb" style="left:462px;top:586px;width:36px"></div>
<div class="t" style="left:462px;top:592.44px;width:36px;text-align:center;font-size:12px;color:#fff;font-weight:normal;transform:scaleX(0.92);transform-origin:50% 0;">Low</div>
<div class="pb" style="left:499px;top:586px;width:36px"></div>
<div class="t" style="left:499px;top:592.44px;width:36px;text-align:center;font-size:12px;color:#fff;font-weight:normal;transform:scaleX(0.92);transform-origin:50% 0;">High</div>
<div class="pb" style="left:536px;top:586px;width:37px"></div>
<div class="t" style="left:536px;top:592.44px;width:37px;text-align:center;font-size:12px;color:#fff;font-weight:normal;transform:scaleX(0.92);transform-origin:50% 0;">Panic</div>
<div class="sp" style="left:575px;top:585px;width:92px"></div>
<div class="sp" style="left:666px;top:585px;width:94px"></div>
<div class="t" style="left:641px;top:591.14px;font-size:12px;color:#1e1e1e;font-weight:normal;transform:scaleX(0.92);transform-origin:0 0;">0</div>
<div class="t" style="left:734px;top:591.14px;font-size:12px;color:#1e1e1e;font-weight:normal;transform:scaleX(0.92);transform-origin:0 0;">0</div>
<div class="pb" style="left:760px;top:586px;width:36px"></div>
<div class="t" style="left:760px;top:592.44px;width:36px;text-align:center;font-size:12px;color:#fff;font-weight:normal;transform:scaleX(0.92);transform-origin:50% 0;">Yes</div>
<div class="pb on" style="left:797px;top:586px;width:36px"></div>
<div class="t" style="left:797px;top:592.44px;width:36px;text-align:center;font-size:12px;color:#fff;font-weight:normal;transform:scaleX(0.92);transform-origin:50% 0;">No</div>
<div class="cb" style="left:835px;top:586px;width:78px"><i></i></div>
<div class="t" style="left:839px;top:591.14px;font-size:12px;color:#2e2e2e;font-weight:normal;transform:scaleX(0.98);transform-origin:0 0;">Monitoring</div>
<div class="cb" style="left:915px;top:586px;width:71px"><i></i></div>
<div class="tx" style="left:988px;top:586px;width:40px"></div>
<div class="t" style="left:991px;top:591.14px;font-size:12px;color:#1e1e1e;font-weight:normal;transform:scaleX(0.92);transform-origin:0 0;">Dev</div>
<svg class="a" style="left:0;top:0" width="1024" height="624"><path d="M654.5 134.5 L658.0 131.0 L661.5 134.5" fill="none" stroke="#ababab" stroke-width="1.2"/><path d="M654.5 139.5 L658.0 143.0 L661.5 139.5" fill="none" stroke="#ababab" stroke-width="1.2"/><path d="M747.5 134.5 L751.0 131.0 L754.5 134.5" fill="none" stroke="#000" stroke-width="1.9"/><path d="M747.5 139.5 L751.0 143.0 L754.5 139.5" fill="none" stroke="#ababab" stroke-width="1.2"/><path d="M654.5 158.5 L658.0 155.0 L661.5 158.5" fill="none" stroke="#ababab" stroke-width="1.2"/><path d="M654.5 163.5 L658.0 167.0 L661.5 163.5" fill="none" stroke="#ababab" stroke-width="1.2"/><path d="M747.5 158.5 L751.0 155.0 L754.5 158.5" fill="none" stroke="#000" stroke-width="1.9"/><path d="M747.5 163.5 L751.0 167.0 L754.5 163.5" fill="none" stroke="#ababab" stroke-width="1.2"/><path d="M654.5 182.5 L658.0 179.0 L661.5 182.5" fill="none" stroke="#ababab" stroke-width="1.2"/><path d="M654.5 187.5 L658.0 191.0 L661.5 187.5" fill="none" stroke="#000" stroke-width="1.9"/><path d="M747.5 182.5 L751.0 179.0 L754.5 182.5" fill="none" stroke="#000" stroke-width="1.9"/><path d="M747.5 187.5 L751.0 191.0 L754.5 187.5" fill="none" stroke="#ababab" stroke-width="1.2"/><path d="M654.5 206.5 L658.0 203.0 L661.5 206.5" fill="none" stroke="#ababab" stroke-width="1.2"/><path d="M654.5 211.5 L658.0 215.0 L661.5 211.5" fill="none" stroke="#ababab" stroke-width="1.2"/><path d="M747.5 206.5 L751.0 203.0 L754.5 206.5" fill="none" stroke="#000" stroke-width="1.9"/><path d="M747.5 211.5 L751.0 215.0 L754.5 211.5" fill="none" stroke="#ababab" stroke-width="1.2"/><path d="M654.5 231.5 L658.0 228.0 L661.5 231.5" fill="none" stroke="#ababab" stroke-width="1.2"/><path d="M654.5 236.5 L658.0 240.0 L661.5 236.5" fill="none" stroke="#ababab" stroke-width="1.2"/><path d="M747.5 231.5 L751.0 228.0 L754.5 231.5" fill="none" stroke="#000" stroke-width="1.9"/><path d="M747.5 236.5 L751.0 240.0 L754.5 236.5" fill="none" stroke="#ababab" stroke-width="1.2"/><path d="M654.5 255.5 L658.0 252.0 L661.5 255.5" fill="none" stroke="#ababab" stroke-width="1.2"/><path d="M654.5 260.5 L658.0 264.0 L661.5 260.5" fill="none" stroke="#ababab" stroke-width="1.2"/><path d="M747.5 255.5 L751.0 252.0 L754.5 255.5" fill="none" stroke="#000" stroke-width="1.9"/><path d="M747.5 260.5 L751.0 264.0 L754.5 260.5" fill="none" stroke="#ababab" stroke-width="1.2"/><path d="M654.5 279.5 L658.0 276.0 L661.5 279.5" fill="none" stroke="#ababab" stroke-width="1.2"/><path d="M654.5 284.5 L658.0 288.0 L661.5 284.5" fill="none" stroke="#ababab" stroke-width="1.2"/><path d="M747.5 279.5 L751.0 276.0 L754.5 279.5" fill="none" stroke="#000" stroke-width="1.9"/><path d="M747.5 284.5 L751.0 288.0 L754.5 284.5" fill="none" stroke="#ababab" stroke-width="1.2"/><path d="M654.5 303.5 L658.0 300.0 L661.5 303.5" fill="none" stroke="#ababab" stroke-width="1.2"/><path d="M654.5 308.5 L658.0 312.0 L661.5 308.5" fill="none" stroke="#ababab" stroke-width="1.2"/><path d="M747.5 303.5 L751.0 300.0 L754.5 303.5" fill="none" stroke="#000" stroke-width="1.9"/><path d="M747.5 308.5 L751.0 312.0 L754.5 308.5" fill="none" stroke="#ababab" stroke-width="1.2"/><path d="M654.5 327.5 L658.0 324.0 L661.5 327.5" fill="none" stroke="#ababab" stroke-width="1.2"/><path d="M654.5 332.5 L658.0 336.0 L661.5 332.5" fill="none" stroke="#000" stroke-width="1.9"/><path d="M747.5 327.5 L751.0 324.0 L754.5 327.5" fill="none" stroke="#000" stroke-width="1.9"/><path d="M747.5 332.5 L751.0 336.0 L754.5 332.5" fill="none" stroke="#ababab" stroke-width="1.2"/><path d="M654.5 351.5 L658.0 348.0 L661.5 351.5" fill="none" stroke="#ababab" stroke-width="1.2"/><path d="M654.5 356.5 L658.0 360.0 L661.5 356.5" fill="none" stroke="#000" stroke-width="1.9"/><path d="M747.5 351.5 L751.0 348.0 L754.5 351.5" fill="none" stroke="#000" stroke-width="1.9"/><path d="M747.5 356.5 L751.0 360.0 L754.5 356.5" fill="none" stroke="#ababab" stroke-width="1.2"/><path d="M654.5 376.5 L658.0 373.0 L661.5 376.5" fill="none" stroke="#ababab" stroke-width="1.2"/><path d="M654.5 381.5 L658.0 385.0 L661.5 381.5" fill="none" stroke="#ababab" stroke-width="1.2"/><path d="M747.5 376.5 L751.0 373.0 L754.5 376.5" fill="none" stroke="#000" stroke-width="1.9"/><path d="M747.5 381.5 L751.0 385.0 L754.5 381.5" fill="none" stroke="#ababab" stroke-width="1.2"/><path d="M654.5 400.5 L658.0 397.0 L661.5 400.5" fill="none" stroke="#ababab" stroke-width="1.2"/><path d="M654.5 405.5 L658.0 409.0 L661.5 405.5" fill="none" stroke="#ababab" stroke-width="1.2"/><path d="M747.5 400.5 L751.0 397.0 L754.5 400.5" fill="none" stroke="#000" stroke-width="1.9"/><path d="M747.5 405.5 L751.0 409.0 L754.5 405.5" fill="none" stroke="#ababab" stroke-width="1.2"/><path d="M654.5 424.5 L658.0 421.0 L661.5 424.5" fill="none" stroke="#ababab" stroke-width="1.2"/><path d="M654.5 429.5 L658.0 433.0 L661.5 429.5" fill="none" stroke="#ababab" stroke-width="1.2"/><path d="M747.5 424.5 L751.0 421.0 L754.5 424.5" fill="none" stroke="#000" stroke-width="1.9"/><path d="M747.5 429.5 L751.0 433.0 L754.5 429.5" fill="none" stroke="#ababab" stroke-width="1.2"/><path d="M654.5 448.5 L658.0 445.0 L661.5 448.5" fill="none" stroke="#ababab" stroke-width="1.2"/><path d="M654.5 453.5 L658.0 457.0 L661.5 453.5" fill="none" stroke="#ababab" stroke-width="1.2"/><path d="M747.5 448.5 L751.0 445.0 L754.5 448.5" fill="none" stroke="#000" stroke-width="1.9"/><path d="M747.5 453.5 L751.0 457.0 L754.5 453.5" fill="none" stroke="#ababab" stroke-width="1.2"/><path d="M654.5 472.5 L658.0 469.0 L661.5 472.5" fill="none" stroke="#ababab" stroke-width="1.2"/><path d="M654.5 477.5 L658.0 481.0 L661.5 477.5" fill="none" stroke="#ababab" stroke-width="1.2"/><path d="M747.5 472.5 L751.0 469.0 L754.5 472.5" fill="none" stroke="#000" stroke-width="1.9"/><path d="M747.5 477.5 L751.0 481.0 L754.5 477.5" fill="none" stroke="#ababab" stroke-width="1.2"/><path d="M654.5 496.5 L658.0 493.0 L661.5 496.5" fill="none" stroke="#ababab" stroke-width="1.2"/><path d="M654.5 501.5 L658.0 505.0 L661.5 501.5" fill="none" stroke="#ababab" stroke-width="1.2"/><path d="M747.5 496.5 L751.0 493.0 L754.5 496.5" fill="none" stroke="#000" stroke-width="1.9"/><path d="M747.5 501.5 L751.0 505.0 L754.5 501.5" fill="none" stroke="#ababab" stroke-width="1.2"/><path d="M654.5 521.5 L658.0 518.0 L661.5 521.5" fill="none" stroke="#ababab" stroke-width="1.2"/><path d="M654.5 526.5 L658.0 530.0 L661.5 526.5" fill="none" stroke="#ababab" stroke-width="1.2"/><path d="M747.5 521.5 L751.0 518.0 L754.5 521.5" fill="none" stroke="#000" stroke-width="1.9"/><path d="M747.5 526.5 L751.0 530.0 L754.5 526.5" fill="none" stroke="#ababab" stroke-width="1.2"/><path d="M654.5 545.5 L658.0 542.0 L661.5 545.5" fill="none" stroke="#ababab" stroke-width="1.2"/><path d="M654.5 550.5 L658.0 554.0 L661.5 550.5" fill="none" stroke="#000" stroke-width="1.9"/><path d="M747.5 545.5 L751.0 542.0 L754.5 545.5" fill="none" stroke="#000" stroke-width="1.9"/><path d="M747.5 550.5 L751.0 554.0 L754.5 550.5" fill="none" stroke="#ababab" stroke-width="1.2"/><path d="M654.5 569.5 L658.0 566.0 L661.5 569.5" fill="none" stroke="#ababab" stroke-width="1.2"/><path d="M654.5 574.5 L658.0 578.0 L661.5 574.5" fill="none" stroke="#ababab" stroke-width="1.2"/><path d="M747.5 569.5 L751.0 566.0 L754.5 569.5" fill="none" stroke="#000" stroke-width="1.9"/><path d="M747.5 574.5 L751.0 578.0 L754.5 574.5" fill="none" stroke="#ababab" stroke-width="1.2"/><path d="M654.5 593.5 L658.0 590.0 L661.5 593.5" fill="none" stroke="#ababab" stroke-width="1.2"/><path d="M654.5 598.5 L658.0 602.0 L661.5 598.5" fill="none" stroke="#ababab" stroke-width="1.2"/><path d="M747.5 593.5 L751.0 590.0 L754.5 593.5" fill="none" stroke="#000" stroke-width="1.9"/><path d="M747.5 598.5 L751.0 602.0 L754.5 598.5" fill="none" stroke="#ababab" stroke-width="1.2"/></svg>
<div class="a" style="left:195px;top:104px;width:381px;height:504px;border:3px solid #f00;border-radius:2px"></div>
<div class="a" style="left:1010px;top:75px;width:14px;height:549px;background:#e9e9e9"></div>
<svg class="a" style="left:1010px;top:75px" width="14" height="20"><path d="M4.5 9.5 L8 6 L11 9.5Z" fill="#8a8a8a"/></svg>
<div class="a" style="left:1011px;top:91px;width:13px;height:328px;border:1px solid #9a9a9a;border-right:none;background:linear-gradient(90deg,#f3f3f3,#e6e6e6 55%,#d2d2d2 90%,#e2e2e2)"></div>
<div class="a" style="left:1015px;top:252px;width:6px;height:1px;background:#4a4a4a;box-shadow:0 3px 0 #555,0 6px 0 #444"></div>
<svg class="a" style="left:1010px;top:590px" width="14" height="20"><path d="M4.5 10 L8 13.5 L11 10Z" fill="#8a8a8a"/></svg>
<div class="a" style="left:184px;top:610px;width:840px;height:14px;background:#e9e9e9"></div>
<svg class="a" style="left:184px;top:610px" width="20" height="14"><path d="M9.5 4.5 L6 8 L9.5 11Z" fill="#8a8a8a"/></svg>
<div class="a" style="left:200px;top:611px;width:684px;height:13px;border:1px solid #9a9a9a;background:linear-gradient(#f2f2f2,#dcdcdc)"></div>
<div class="a" style="left:537px;top:614px;width:1px;height:6px;background:#555;box-shadow:2px 0 0 #555,4px 0 0 #555"></div>
<svg class="a" style="left:990px;top:610px" width="20" height="14"><path d="M10 4.5 L13.5 8 L10 11Z" fill="#8a8a8a"/></svg>
</body></html>
